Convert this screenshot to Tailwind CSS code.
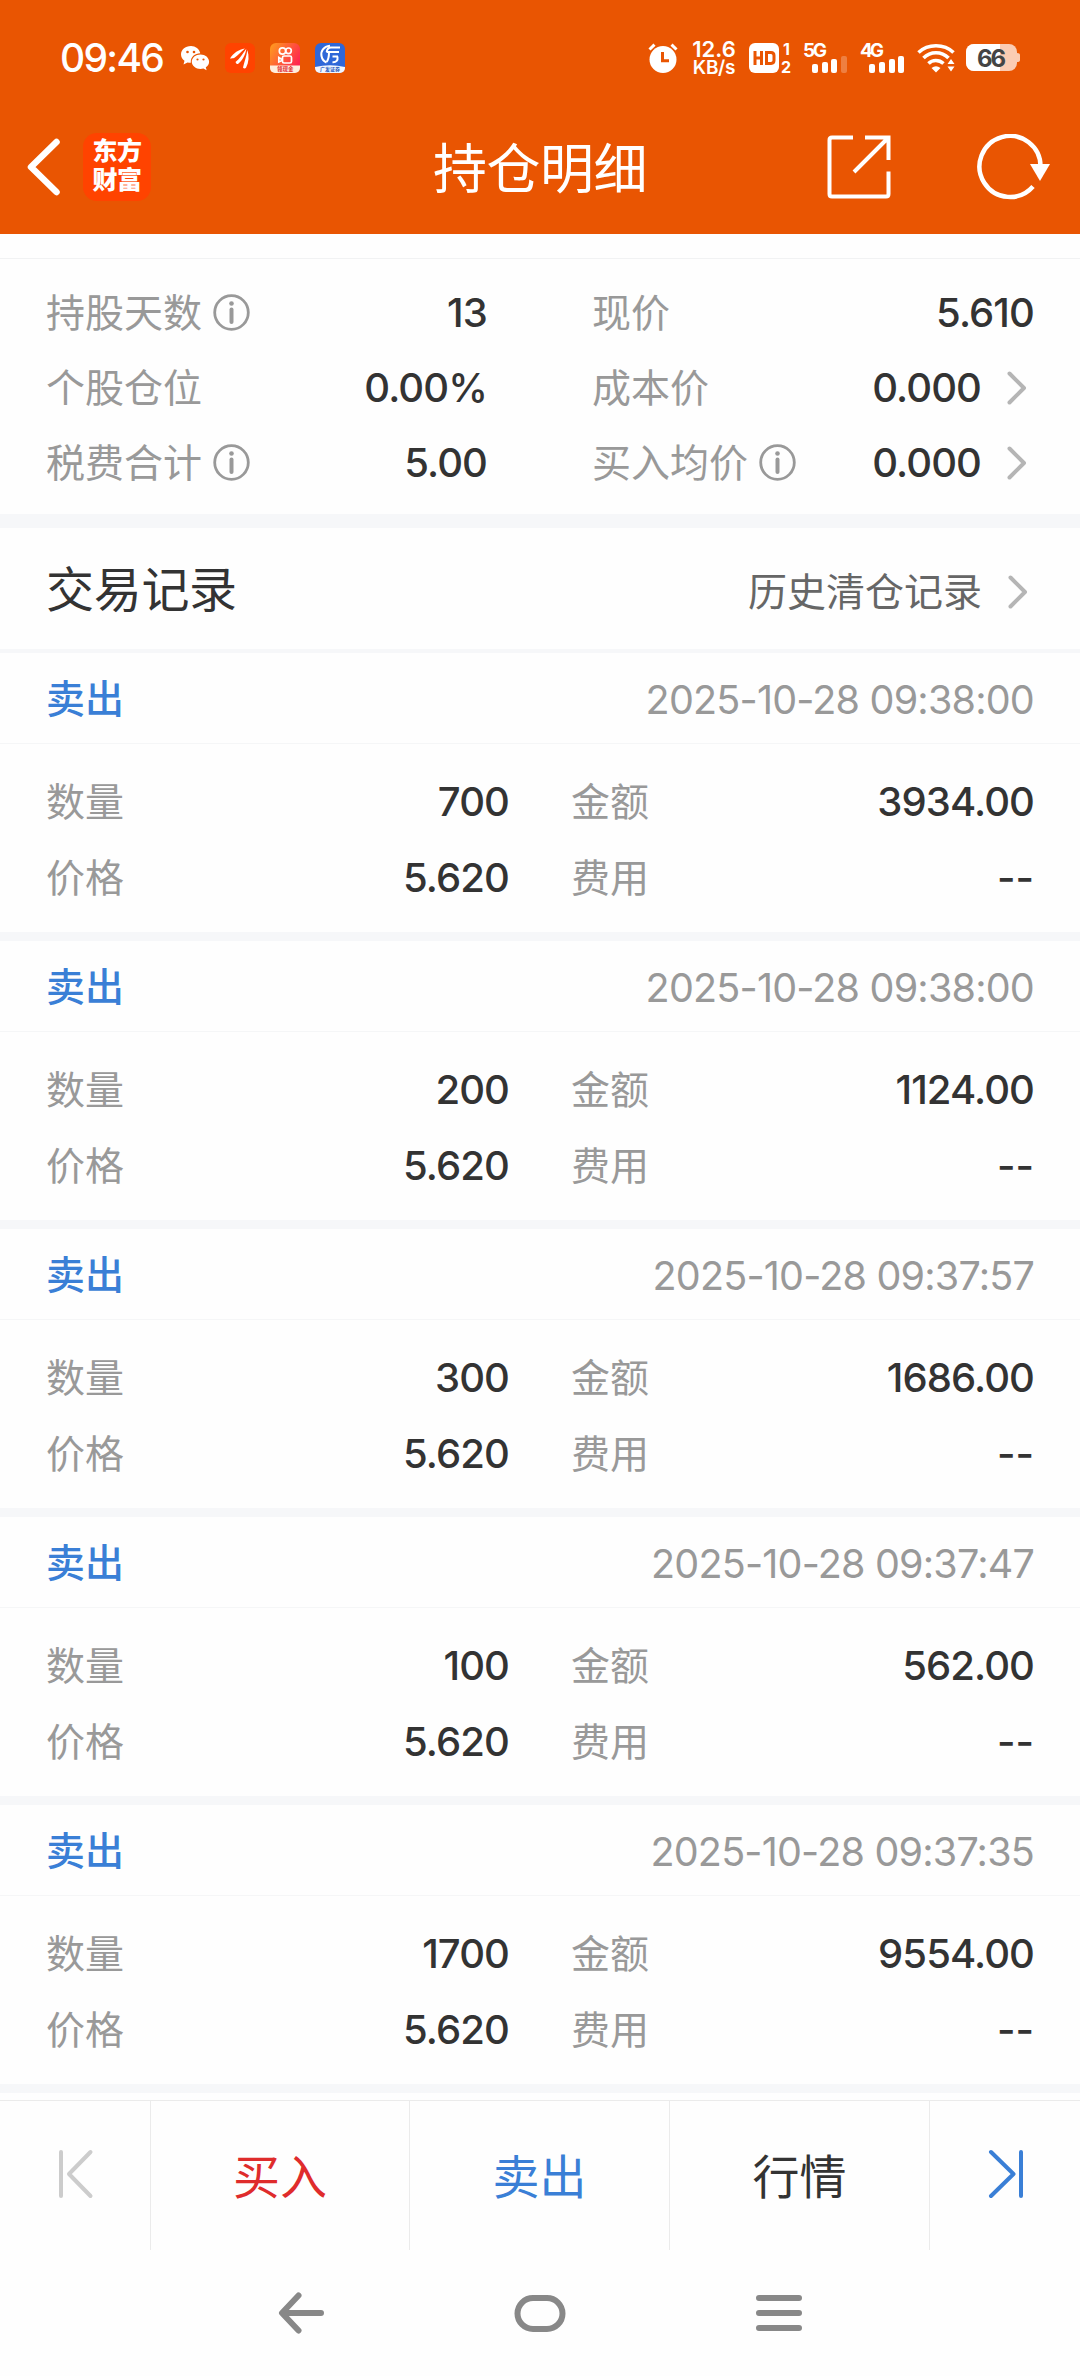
<!DOCTYPE html>
<html lang="zh-CN">

<head>
    <meta charset="UTF-8">
    <meta name="viewport" content="width=device-width, initial-scale=1.0">
    <title>持仓明细</title>
    <script src="https://cdn.jsdelivr.net/npm/@tailwindcss/browser@4"></script>
</head>

<body class="bg-white">
    <div class="w-[1080px] h-[2376px] flex flex-col overflow-hidden bg-[#fefefe] font-['Inter','Noto_Sans_CJK_SC',sans-serif] text-[#333333]">
        <header class="h-[234px] shrink-0 bg-[#e95502] text-white">
            <!-- 状态栏 -->
            <div class="h-[100px] pt-[15px] pl-[60px] pr-[60px] flex items-center justify-between">
                <div class="flex items-center">
                    <span class="w-[120px] text-[39px] font-medium leading-none tracking-[-1.7px]">09:46</span>
                    <svg class="mr-[15px]" width="30" height="30" viewBox="0 0 30 30">
                        <path fill="#fff" d="M11 3C5 3 1 7 1 11.500c0 2.600 1.300 4.800 3.500 6.300L3.500 21.500l4-2.100c1 .3 2.200.4 3.300.4C10.300 14 15 10.300 20.300 10.300 19.300 6 15.500 3 11 3z" />
                        <path fill="#fff" d="M20.500 11.500c-4.800 0-8.700 3.200-8.700 7.200s3.900 7.200 8.700 7.200c1 0 2-.1 2.900-.4l3.200 1.700-.8-2.900c2-1.300 3.300-3.300 3.300-5.600 0-4-3.800-7.200-8.600-7.200z" />
                        <circle cx="7.500" cy="9" r="1.300" fill="#e95502" />
                        <circle cx="14" cy="9" r="1.300" fill="#e95502" />
                        <circle cx="17.500" cy="16.500" r="1.100" fill="#e95502" />
                        <circle cx="23.500" cy="16.500" r="1.100" fill="#e95502" />
                    </svg>
                    <svg class="mr-[15px]" width="30" height="30" viewBox="0 0 30 30">
                        <rect width="30" height="30" rx="6" fill="#ff4300" />
                        <path fill="#fff" d="M5 15.500C8.500 10 13.500 6.500 20 5.500 16 8.500 13 12.500 9.500 14.800 8 15.500 6.500 15.500 5 15.500zM10.500 19c4.500-3.500 7-8 10.800-13.200C20.500 12 17.500 17.500 13 21c-1.200.3-2-.8-2.500-2zM18 24.500c1.300-6 3.500-11 4.300-17.500 2 6 1.700 12-1.300 17.800-.8 1-2.500.8-3-.3z" />
                    </svg>
                    <svg class="mr-[15px]" width="30" height="30" viewBox="0 0 30 30">
                        <defs>
                            <linearGradient id="ks" x1="0" y1="0" x2="1" y2="0.600">
                                <stop offset="0" stop-color="#ff9f1c" />
                                <stop offset="1" stop-color="#ff2450" />
                            </linearGradient>
                        </defs>
                        <rect width="30" height="30" rx="6" fill="url(#ks)" />
                        <g fill="none" stroke="#fff" stroke-width="1.700">
                            <circle cx="12.500" cy="8" r="3.200" />
                            <circle cx="18.500" cy="7.800" r="2.800" />
                            <rect x="12.500" y="13" width="9" height="7" rx="1.500" />
                            <path d="M12 16.500l-3.200-2v4.500l3.200-1.500" />
                        </g>
                        <path d="M0 22.500h30V25a5 5 0 0 1-5 5H5a5 5 0 0 1-5-5z" fill="#ffeedd" />
                        <text x="7" y="28.300" font-size="5.500" font-weight="700" fill="#e0252e">领现金</text>
                    </svg>
                    <svg width="30" height="30" viewBox="0 0 30 30">
                        <rect width="30" height="30" rx="6" fill="#2f67d8" />
                        <g fill="none" stroke="#fff" stroke-width="2">
                            <path d="M15 2.800C8.500 3.500 5.500 8 6.500 13c.6 3.200 2.500 5.500 5 6.500" />
                            <path d="M25 4.500H16c-3 0-4 2-4.300 4.500M24 9H11.500M14 9.500c0 4-.5 7-2.500 9.500M23 13.500h-5.500M22.500 13.500c.5 4-1 6-5 5.800" />
                        </g>
                        <path d="M0 24q15-3.500 30 0v1a5 5 0 0 1-5 5H5a5 5 0 0 1-5-5z" fill="#f2f6ff" />
                        <text x="5" y="28.300" font-size="5" font-weight="700" fill="#2456b8">广发证券</text>
                    </svg>
                </div>
                <div class="flex items-center">
                    <svg class="mr-[13px]" width="30" height="30" viewBox="0 0 30 30">
                        <circle cx="15" cy="16.500" r="13.500" fill="#fff" />
                        <path d="M1.500 6.500l5-4.800M28.500 6.500l-5-4.800" stroke="#fff" stroke-width="3" />
                        <path d="M14.500 9v8.700h6.500" stroke="#e95502" stroke-width="3" fill="none" />
                    </svg>
                    <div class="w-[46px] mr-[12px] text-center font-semibold">
                        <div class="text-[22px] leading-[20px]">12.6</div>
                        <div class="text-[19px] leading-[18px] tracking-[-0.3px]">KB/s</div>
                    </div>
                    <svg class="mr-[11px] overflow-visible" width="43" height="30" viewBox="0 0 43 30">
                        <rect width="30" height="30" rx="6" fill="#fff" />
                        <path d="M6 8v14M12.500 8v14M6 15h6.500M17.500 9.500v11h4.500q3-.3 3-3v-5q0-3-3-3z" fill="none" stroke="#e95502" stroke-width="3" />
                        <text x="34" y="12" font-size="16" font-weight="700" fill="#fff">1</text>
                        <text x="32" y="29.500" font-size="16" font-weight="700" fill="#fff">2</text>
                    </svg>
                    <svg class="mr-[12px] overflow-visible" width="45" height="32" viewBox="0 0 45 32">
                        <text x="0" y="15" font-size="19" font-weight="700" fill="#fff" textLength="24">5G</text>
                        <rect x="9" y="22" width="6" height="9" rx="2" fill="#fff" />
                        <rect x="19" y="20" width="6" height="11" rx="2" fill="#fff" />
                        <rect x="28" y="17" width="6" height="14" rx="2" fill="#fff" />
                        <rect x="38" y="14" width="6" height="17" rx="2" fill="#fff" opacity=".25" />
                    </svg>
                    <svg class="mr-[12px] overflow-visible" width="45" height="32" viewBox="0 0 45 32">
                        <text x="0" y="15" font-size="19" font-weight="700" fill="#fff" textLength="24">4G</text>
                        <rect x="9" y="22" width="6" height="9" rx="2" fill="#fff" />
                        <rect x="19" y="20" width="6" height="11" rx="2" fill="#fff" />
                        <rect x="29" y="17" width="6" height="14" rx="2" fill="#fff" />
                        <rect x="38" y="14" width="6" height="17" rx="2" fill="#fff" />
                    </svg>
                    <svg class="mr-[11px]" width="38" height="30" viewBox="0 0 38 30">
                        <g fill="none" stroke="#fff" stroke-width="3.600">
                            <path d="M1.500 9.500C11 .500 27 .500 36.500 9.500" />
                            <path d="M6.500 15C13.500 8 24.500 8 31.500 15" />
                            <path d="M11.500 20.500C15.500 16.500 22 16.500 26.500 20.500" />
                        </g>
                        <path d="M14.500 25q4.500-3.500 9 0l-4.500 4.500z" fill="#fff" />
                        <path d="M34 16l3.500 5h-7zM34 28.500l3.500-5h-7z" fill="#fff" />
                    </svg>
                    <svg width="54" height="28" viewBox="0 0 54 28">
                        <defs>
                            <clipPath id="bat"><rect width="51" height="27" rx="8" /></clipPath>
                        </defs>
                        <g clip-path="url(#bat)">
                            <rect width="51" height="28" fill="#fbccb3" />
                            <rect width="34" height="28" fill="#fff" />
                        </g>
                        <path d="M51 9q3 0 3 2v5q0 2-3 2z" fill="#fbccb3" />
                        <text x="25.500" y="22.500" text-anchor="middle" font-size="24" font-weight="700" fill="#444" textLength="29">66</text>
                    </svg>
                </div>
            </div>

            <!-- 标题栏 -->
            <div class="h-[134px] px-[27px] grid grid-cols-[1fr_auto_1fr] items-center">
                <div class="flex items-center">
                    <svg width="34" height="58" viewBox="0 0 34 58">
                        <path d="M29.500 4L4 29l25.500 25" fill="none" stroke="#fff" stroke-width="6.500" stroke-linecap="round" stroke-linejoin="round" />
                    </svg>
                    <div class="ml-[22px] size-[68px] rounded-[14px] bg-[#ff4300] flex flex-col items-center justify-center pb-[3px] text-[25px] leading-[29px] font-black tracking-[-0.5px]">
                        <div>东方</div>
                        <div>财富</div>
                    </div>
                </div>
                <h1 class="pt-[5px] text-[54px] leading-[80px] tracking-[-0.5px]">持仓明细</h1>
                <div class="flex items-center justify-end">
                    <svg class="mr-[86px]" width="64" height="64" viewBox="0 0 64 64">
                        <g fill="none" stroke="#fff" stroke-width="4">
                            <path d="M26 2.500H5q-2.500 0-2.500 2.500v54q0 2.500 2.500 2.500h54q2.500 0 2.500-2.500V36.500" />
                            <path d="M38 2.500h23.500V25M61.500 2.500L27 37" />
                        </g>
                    </svg>
                    <svg width="76" height="66" viewBox="0 0 76 66">
                        <path d="M56 52.500A30.500 30.500 0 1 1 63.500 33" fill="none" stroke="#fff" stroke-width="4.500" />
                        <path d="M53 30h20L63 47z" fill="#fff" />
                    </svg>
                </div>
            </div>
        </header>

        <!-- 持仓概览 -->
        <section class="h-[280px] shrink-0 mt-[24px] -mb-[24px] border-t border-[#f1f2f3] pt-[16px] px-[46px] text-[39px] leading-[75px]">
            <div id="summary"></div>
        </section>
        <div class="h-[14px] shrink-0 bg-[#f6f7f9]"></div>

        <!-- 交易记录 -->
        <section class="h-[121px] shrink-0 pt-[3px] pl-[46px] pr-[52px] flex items-center justify-between">
            <h2 class="text-[48px] leading-[80px] tracking-[-0.3px]">交易记录</h2>
            <div class="pt-[3px] flex items-center text-[39px] leading-[60px] text-[#666666]">
                <span>历史清仓记录</span>
                <svg class="ml-[26px]" width="20" height="34" viewBox="0 0 20 34">
                    <path d="M2.500 2.500L17 17 2.500 31.500" fill="none" stroke="#b5b5b5" stroke-width="4" stroke-linecap="round" stroke-linejoin="round" />
                </svg>
            </div>
        </section>
        <div class="h-[4px] shrink-0 bg-[#f6f7f9]"></div>
        <main id="record-list" class="shrink-0"></main>

        <!-- 底部操作栏 -->
        <nav class="mt-[7px] h-[150px] shrink-0 border-t border-[#ebebeb] grid grid-cols-[151px_259px_260px_260px_150px] divide-x divide-[#ebebeb] text-[47px] leading-[70px] text-center">
            <button class="flex items-center pl-[58px] pb-[4px]">
                <svg width="36" height="50" viewBox="0 0 36 50">
                    <path d="M3 3v44M32.500 3L11 25l21.500 22" fill="none" stroke="#cccccc" stroke-width="4" stroke-linecap="round" stroke-linejoin="round" />
                </svg>
            </button>
            <button class="pt-[3px] text-[#df2c2c]">买入</button>
            <button class="pt-[3px] text-[#3a7fd6]">卖出</button>
            <button class="pt-[3px]">行情</button>
            <button class="flex items-center pl-[58px] pb-[4px]">
                <svg width="36" height="50" viewBox="0 0 36 50">
                    <path d="M33 3v44M3 3l22.500 22L3 47" fill="none" stroke="#3a7fd6" stroke-width="4" stroke-linecap="round" stroke-linejoin="round" />
                </svg>
            </button>
        </nav>

        <!-- 系统导航键 -->
        <footer class="grow px-[278px] flex items-center justify-between">
            <svg width="47" height="42" viewBox="0 0 47 42">
                <path d="M43 21H5M20.500 3.500L4 21l16.500 17.500" fill="none" stroke="#888888" stroke-width="6" stroke-linecap="round" stroke-linejoin="round" />
            </svg>
            <svg width="52" height="38" viewBox="0 0 52 38">
                <rect x="3.500" y="4" width="45" height="31" rx="15.500" fill="none" stroke="#888888" stroke-width="6" />
            </svg>
            <svg width="47" height="38" viewBox="0 0 47 38">
                <path d="M4 4h40M4 19h40M4 34h40" stroke="#888888" stroke-width="6" stroke-linecap="round" />
            </svg>
        </footer>
    </div>

    <script>
        const infoIcon = `
            <svg class="ml-[11px]" width="37" height="37" viewBox="0 0 37 37">
                <circle cx="18.500" cy="18.500" r="16.800" fill="none" stroke="#999999" stroke-width="2.800" />
                <circle cx="18.500" cy="9.500" r="2.300" fill="#999999" />
                <path d="M18.500 15.500v12.500" stroke="#999999" stroke-width="4" stroke-linecap="round" />
            </svg>`;

        const arrowIcon = `
            <svg class="ml-[26px] mr-[7px]" width="20" height="34" viewBox="0 0 20 34">
                <path d="M2.500 2.500L17 17 2.500 31.500" fill="none" stroke="#b5b5b5" stroke-width="4" stroke-linecap="round" stroke-linejoin="round" />
            </svg>`;

        const summary = [
            [{ label: '持股天数', info: true, value: '13' }, { label: '现价', value: '5.610' }],
            [{ label: '个股仓位', value: '0.00%' }, { label: '成本价', value: '0.000', arrow: true }],
            [{ label: '税费合计', info: true, value: '5.00' }, { label: '买入均价', info: true, value: '0.000', arrow: true }]
        ];

        const records = [
            { time: '2025-10-28 09:38:00', count: '700', amount: '3934.00' },
            { time: '2025-10-28 09:38:00', count: '200', amount: '1124.00' },
            { time: '2025-10-28 09:37:57', count: '300', amount: '1686.00' },
            { time: '2025-10-28 09:37:47', count: '100', amount: '562.00' },
            { time: '2025-10-28 09:37:35', count: '1700', amount: '9554.00' }
        ];

        // 概览里的一个单元格
        function summaryCell(item) {
            return `
                <div class="flex items-center justify-between">
                    <div class="flex items-center text-[#999999]">${item.label}${item.info ? infoIcon : ''}</div>
                    <div class="flex items-center text-[40px] font-medium tracking-[-0.9px]">${item.value}${item.arrow ? arrowIcon : ''}</div>
                </div>`;
        }

        document.getElementById('summary').innerHTML = summary.map(row => `
            <div class="h-[75px] grid grid-cols-[441px_442px] gap-x-[105px]">${row.map(summaryCell).join('')}</div>
        `).join('');

        document.getElementById('record-list').innerHTML = records.map(record => `
            <div class="h-[288px] border-b-[9px] border-[#f6f7f9]">
                <div class="h-[91px] pt-[3px] px-[46px] border-b border-[#f5f6f7] flex items-center justify-between">
                    <span class="text-[39px] font-medium text-[#3a7fd6]">卖出</span>
                    <span class="pt-[2px] text-[39.500px] tracking-[-0.8px] text-[#999999]">${record.time}</span>
                </div>
                <div class="pt-[20px] px-[46px] grid grid-cols-[463px_463px] gap-x-[62px] text-[39px] leading-[76px]">
                    <div class="flex justify-between"><span class="text-[#999999]">数量</span><span class="text-[40px] font-medium tracking-[-0.9px]">${record.count}</span></div>
                    <div class="flex justify-between"><span class="text-[#999999]">金额</span><span class="text-[40px] font-medium tracking-[-0.9px]">${record.amount}</span></div>
                    <div class="flex justify-between"><span class="text-[#999999]">价格</span><span class="text-[40px] font-medium tracking-[-0.9px]">5.620</span></div>
                    <div class="flex justify-between"><span class="text-[#999999]">费用</span><span class="text-[40px] font-medium">--</span></div>
                </div>
            </div>
        `).join('');
    </script>
</body>

</html>
